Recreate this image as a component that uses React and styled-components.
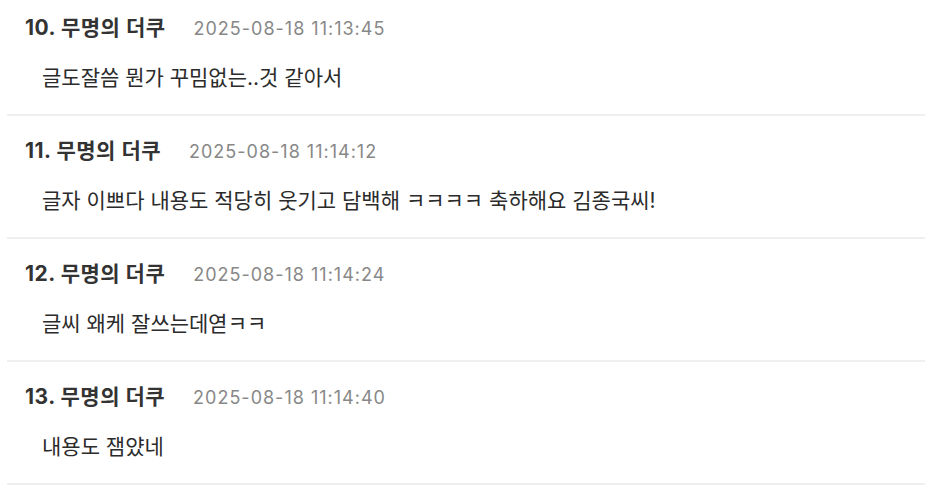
import React from "react";
import styled, { createGlobalStyle } from "styled-components";

const GlobalStyle = createGlobalStyle`
  html, body {
    margin: 0;
    padding: 0;
    background: #ffffff;
  }
  body {
    font-family: Inter, "Noto Sans CJK KR", sans-serif;
    -webkit-font-smoothing: antialiased;
  }
`;

const comments = [
  {
    no: 10,
    name: "무명의 더쿠",
    date: "2025-08-18 11:13:45",
    text: "글도잘씀 뭔가 꾸밈없는..것 같아서",
  },
  {
    no: 11,
    name: "무명의 더쿠",
    date: "2025-08-18 11:14:12",
    text: "글자 이쁘다 내용도 적당히 웃기고 담백해 ㅋㅋㅋㅋ 축하해요 김종국씨!",
  },
  {
    no: 12,
    name: "무명의 더쿠",
    date: "2025-08-18 11:14:24",
    text: "글씨 왜케 잘쓰는데엳ㅋㅋ",
  },
  {
    no: 13,
    name: "무명의 더쿠",
    date: "2025-08-18 11:14:40",
    text: "내용도 잼얐네",
  },
];

const Comments = {
  List: styled.ul`
    list-style: none;
    margin: -7px 0 0 7px;
    padding: 0;
  `,
  Item: styled.li`
    padding: 22px 0 23px 18px;
    border-bottom: 2px solid #efefef;
  `,
  Header: styled.div`
    display: flex;
    align-items: baseline;
    gap: 28px;
    height: 26px;
    line-height: 26px;
  `,
  Author: styled.strong`
    font-size: 21px;
    font-weight: 700;
    color: #333333;
    letter-spacing: 0.5px;
  `,
  Date: styled.span`
    font-size: 18px;
    color: #888888;
    letter-spacing: 1px;
  `,
  Body: styled.p`
    margin: 24px 0 0 17px;
    font-size: 21px;
    line-height: 26px;
    color: #2b2b2b;
  `,
};

const App = () => {
  return (
    <>
      <GlobalStyle />
      <Comments.List>
        {comments.map((c) => (
          <Comments.Item key={c.no}>
            <Comments.Header>
              <Comments.Author>
                {c.no}. {c.name}
              </Comments.Author>
              <Comments.Date>{c.date}</Comments.Date>
            </Comments.Header>
            <Comments.Body>{c.text}</Comments.Body>
          </Comments.Item>
        ))}
      </Comments.List>
    </>
  );
};

export default App;
